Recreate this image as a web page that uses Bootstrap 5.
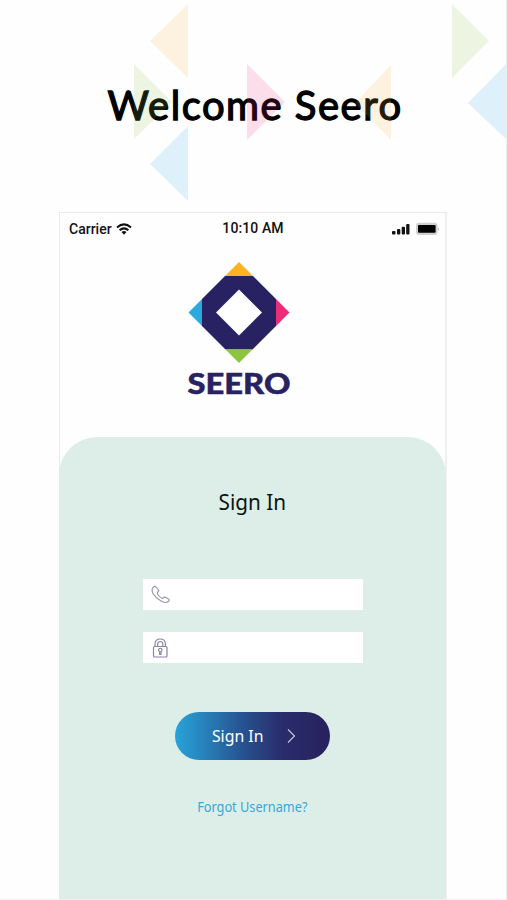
<!DOCTYPE html>
<html lang="en">
<head>
<meta charset="utf-8">
<meta name="viewport" content="width=device-width, initial-scale=1">
<title>Welcome Seero</title>
<link href="https://cdn.jsdelivr.net/npm/bootstrap@5.3.0/dist/css/bootstrap.min.css" rel="stylesheet">
<style>
  body { background: #fefefe; font-family: "Noto Sans", "Open Sans", sans-serif; color: #0b1412; }
  .page { height: 900px; border-right: 1px solid #ededee; border-bottom: 1px solid #efefef; }
  .hero { height: 212px; }
  .hero-shapes { top: 0; left: 0; pointer-events: none; }
  .hero-title { font: 400 40px/48px Lato, sans-serif; -webkit-text-stroke: 1.3px #000; color: #000; padding-top: 81px; padding-left: 4px; letter-spacing: 1.5px; white-space: nowrap; }
  .phone { width: 388px; height: 687px; margin-left: 59px; border: 1px solid #e9e9ea; border-right: 2px solid #efefef; border-bottom: 0; }
  .status { height: 32px; font: 500 14px/16px Roboto, sans-serif; color: #111; padding: 0 6px 0 9px; }
  .clock { padding-right: 2px; margin-top: -3px; letter-spacing: .1px; }
  .brand { height: 192px; padding-top: 17px; padding-right: 28px; }
  .panel { background: #ddeee8; border-radius: 38px 38px 0 0; margin: 0 -1px 0 -1px; height: 463px; padding-top: 49px; }
  .narrow { display: inline-block; transform: scaleX(.93); white-space: nowrap; }
  .panel-title { font-size: 22.3px; line-height: 32px; margin: 0 0 61px; }
  .field { width: 220px; height: 31px; background: #fff; padding-left: 8px; margin-bottom: 22px; }
  .field input { background: transparent; outline: 0; min-width: 0; }
  .submit { width: 155px; height: 48px; margin-top: 27px; padding: 0 0 1px 35px; color: #fff; font-size: 17px; line-height: 24px; background: linear-gradient(90deg, #28a3da 0%, #2785bd 17%, #275392 43%, #292c6b 70%, #28215d 100%); }
  .submit:hover { color: #fff; }
  .arrow { margin-left: 20px; margin-top: 1px; }
  .forgot { font-size: 13.7px; line-height: 20px; color: #35a8db; margin-top: 37px; }
</style>
</head>
<body>
<main class="page position-relative overflow-hidden">
  <header class="hero text-center">
    <h1 class="hero-title mb-0">Welcome Seero</h1>
    <svg class="hero-shapes position-absolute" width="507" height="212" aria-hidden="true">
      <g fill-opacity=".15">
        <path fill="#fbb034" d="M188 4v74l-38-37zM391 65v75l-36-37z"/>
        <path fill="#8cc540" d="M134 64v75l38-37zM452 4v74l37-37z"/>
        <path fill="#ee2a7b" d="M247 64v76l38-38z"/>
        <path fill="#27aae1" d="M188 126v75l-38-37zM507 63v77l-39-37z"/>
      </g>
    </svg>
  </header>
  <section class="phone">
    <div class="status d-flex align-items-center">
      <div class="col d-flex align-items-center gap-1">
        <span>Carrier</span>
        <svg width="16" height="12" viewBox="0 0 16 12" fill="none" stroke="#111" stroke-width="2"><path d="M1 4.4q7-6 14 0M3.6 7.2q4.4-3.7 8.8 0"/><path fill="#111" stroke="none" d="M5.5 9q2.5-1.8 5 0L8 11.7z"/></svg>
      </div>
      <div class="clock">10:10 AM</div>
      <div class="col d-flex align-items-center justify-content-end">
        <svg width="49" height="14" viewBox="0 0 49 14"><g fill="#111"><rect x="2" y="9" width="3.5" height="3.5" rx="1"/><rect x="7" y="7" width="3.3" height="5.5" rx="1"/><rect x="11.7" y="4.8" width="3.3" height="7.7" rx="1"/><rect x="16.2" y="2" width="3.3" height="10.5" rx="1"/></g><rect x="26" y="0.8" width="21.5" height="12.2" rx="3" fill="#d0d0d0"/><rect x="28" y="3" width="17.6" height="7.8" rx="1" fill="#000"/><path fill="#bbb" d="M48 5q2 2 0 4z"/></svg>
      </div>
    </div>
    <div class="brand text-center">
      <svg width="110" height="140" viewBox="-2 0 110 140" role="img" aria-label="Seero">
        <path fill="#292262" d="M39 14h28l23 23v27L66.5 87.500h-27L16 64V37z"/>
        <path fill="#fbb322" d="M53 0l14 14H39z"/><path fill="#29a9dd" d="M2.500 50.500l13.500-13.500v27z"/>
        <path fill="#ee2b79" d="M103.500 50.500L90 37v27z"/><path fill="#8cc640" d="M53 101l13.500-13.500h-27z"/>
        <path fill="#fff" d="M53 27.500l23 23-23 23-23-23z"/>
        <text x="1.5" y="132" fill="#292262" stroke="#292262" stroke-width=".5" font-family="Lato, sans-serif" font-weight="900" font-size="29" textLength="103" lengthAdjust="spacingAndGlyphs">SEERO</text>
      </svg>
    </div>
    <form class="panel d-flex flex-column align-items-center">
      <h2 class="panel-title fw-normal"><span class="narrow">Sign In</span></h2>
      <label class="field d-flex align-items-center">
        <svg class="flex-shrink-0" width="20" height="20" viewBox="0 0 20 20" fill="none" stroke="#9b97ab" stroke-width="1.2" stroke-linejoin="round"><path d="M2.2 2.3Q4.2.4 5.5 2.500L7.500 5q.5 1.200-.5 2-1.300 1 .2 3 2 2.600 3.800 3.200 1 .3 1.600-.6.700-1 2-.3l2.800 1.600q1.500 1 .2 2.300-3.200 2.800-7.900-.4Q4.500 12.800 2 8.500.1 4.500 2.200 2.300z"/></svg>
        <input type="tel" class="border-0 flex-fill" aria-label="Phone">
      </label>
      <label class="field d-flex align-items-center">
        <svg class="flex-shrink-0" width="18" height="20" viewBox="0 0 18 20" fill="none" stroke="#8c83a5" stroke-width="1.2"><rect x="2.5" y="8.5" width="13.5" height="10.5" rx="1"/><path d="M4 8V6q0-5 5.200-5t5.200 5v2M6.600 8V6q0-2.500 2.600-2.500T11.800 6v2"/><path d="M8.600 13.500a1.700 1.700 0 1 1 1.400 0v2.800H8.600z"/></svg>
        <input type="password" class="border-0 flex-fill" aria-label="Password">
      </label>
      <button type="button" class="submit btn border-0 rounded-pill d-flex align-items-center"><span class="narrow">Sign In</span>
        <svg class="arrow" width="12" height="16" viewBox="0 0 12 16" fill="none" stroke="#c9c8dc" stroke-width="1.1"><path d="M3 1.500l6.500 6.500L3 14.500"/></svg>
      </button>
      <a href="#" class="forgot text-decoration-none"><span class="narrow">Forgot Username?</span></a>
    </form>
  </section>
</main>
<script src="https://cdn.jsdelivr.net/npm/bootstrap@5.3.0/dist/js/bootstrap.bundle.min.js"></script>
</body>
</html>
